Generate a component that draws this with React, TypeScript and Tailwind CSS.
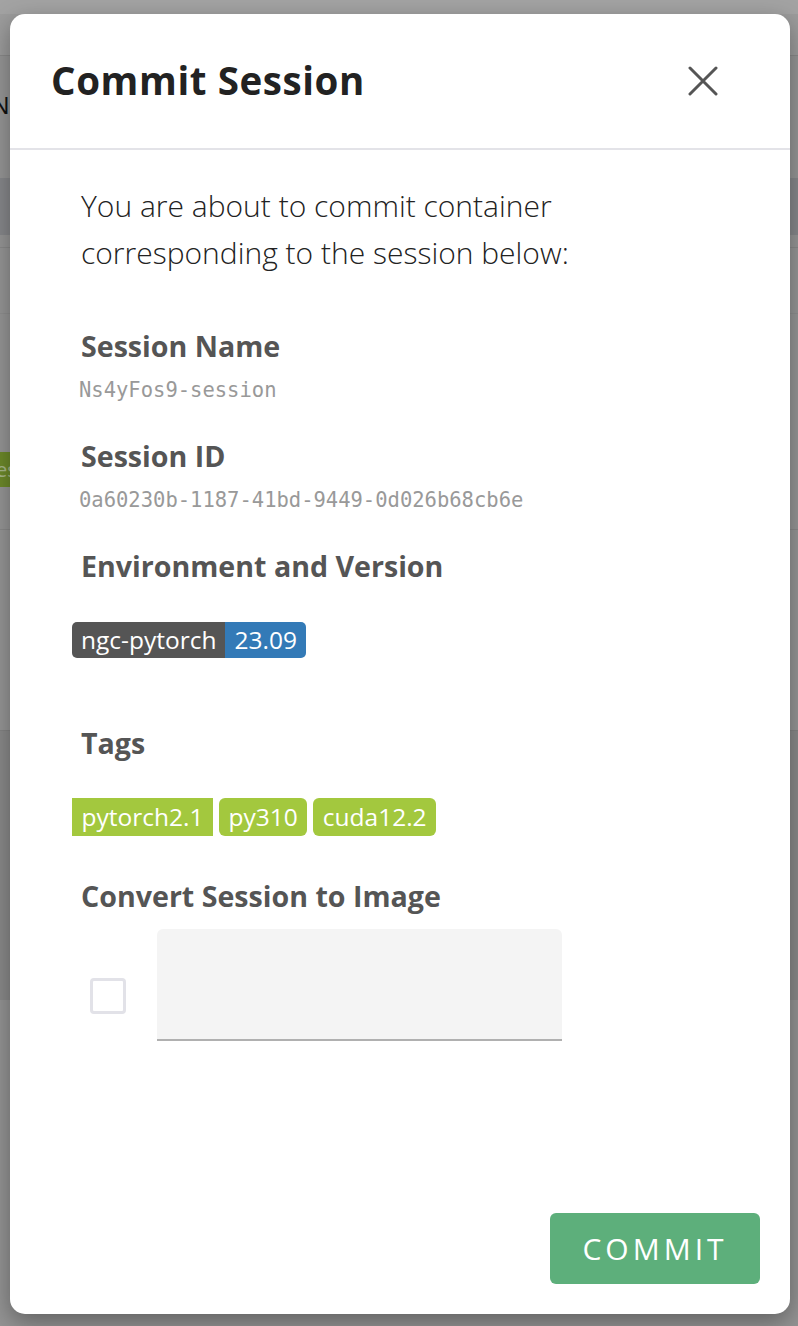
import React from "react";

const font = { fontFamily: '"Open Sans", "Noto Sans", sans-serif' };

const BackgroundPage = () => (
  <div className="flex flex-col h-[1326px] bg-[#969696]">
    <div className="h-[14px] bg-[#a3a3a3]" />
    <div className="h-[42px] bg-[#9c9c9c] border-b border-[#8a8a8a]" />
    <div className="h-[122px] flex items-start pt-[36px] text-[24px] leading-[28px] text-[#111] font-['Liberation_Sans']">
      <span className="-ml-[8px]">N</span>
    </div>
    <div className="h-[57px] bg-[#87888b]" />
    <div className="h-[13px] border-b border-[#8a8a8a]" />
    <div className="h-[66px] border-b border-[#8f8f8f]" />
    <div className="h-[156px] flex items-center">
      <div className="w-[24px] h-[35px] bg-[#6d8a2a] -ml-[10px] mt-[155px] text-[#a9b98a] text-[20px] leading-[35px] pl-[6px]">es</div>
    </div>
    <div className="h-[60px] border-b border-[#8a8a8a]" />
    <div className="h-[200px]" />
    <div className="h-[270px] bg-[#8a8a8a] border-t border-[#838383]" />
    <div className="flex-1 bg-[#949494]" />
  </div>
);

const Badge = ({ text, square }: { text: string; square?: boolean }) => (
  <span
    className={`bg-[#a3c83e] text-white text-[24.5px] leading-[38px] h-[38px] px-[9.5px] ${square ? "" : "rounded-[6px]"}`}
  >
    {text}
  </span>
);

const Label = ({ children, className = "" }: { children: React.ReactNode; className?: string }) => (
  <p className={`text-[28.6px] leading-[40px] font-bold text-[#555] ${className}`}>{children}</p>
);

const App = () => {
  return (
    <div className="relative w-[798px] h-[1326px] overflow-hidden" style={font}>
      <BackgroundPage />
      <div className="absolute left-[10px] top-[14px] w-[780px] h-[1300px] bg-white rounded-[15px] shadow-[0_8px_24px_rgba(0,0,0,0.35)] flex flex-col">
        <div className="h-[136px] flex items-center justify-between pl-[41px] pr-[72px] border-b-2 border-[#e3e3e8]">
          <h1 className="text-[38.5px] font-bold text-[#222] tracking-[0.6px]">Commit Session</h1>
          <svg width="30" height="30" viewBox="0 0 30 30" className="text-[#555]">
            <path d="M2 2 L28 28 M28 2 L2 28" stroke="currentColor" strokeWidth="3" strokeLinecap="round" />
          </svg>
        </div>
        <div className="flex flex-col pl-[71px] flex-1">
          <p className="mt-[32px] text-[30px] leading-[47px] text-[#222] font-light">
            You are about to commit container
            <br />
            corresponding to the session below:
          </p>
          <Label className="mt-[50px]">Session Name</Label>
          <p className="mt-[9px] -ml-[2px] text-[20.5px] leading-[30px] text-[#999] font-['DejaVu_Sans_Mono',monospace]">
            Ns4yFos9-session
          </p>
          <Label className="mt-[31px]">Session ID</Label>
          <p className="mt-[9px] -ml-[2px] text-[20.5px] leading-[30px] text-[#999] font-['DejaVu_Sans_Mono',monospace]">
            0a60230b-1187-41bd-9449-0d026b68cb6e
          </p>
          <Label className="mt-[31px]">Environment and Version</Label>
          <div className="mt-[36px] -ml-[9px] flex h-[36px] text-[24.5px] leading-[36px] text-white">
            <span className="bg-[#555] px-[9px] rounded-l-[5px]">ngc-pytorch</span>
            <span className="bg-[#337ab7] px-[9px] rounded-r-[5px]">23.09</span>
          </div>
          <Label className="mt-[65px]">Tags</Label>
          <div className="mt-[35px] -ml-[9px] flex gap-[6px]">
            <Badge text="pytorch2.1" square />
            <Badge text="py310" />
            <Badge text="cuda12.2" />
          </div>
          <Label className="mt-[40px]">Convert Session to Image</Label>
          <div className="mt-[13px] flex items-end">
            <div className="ml-[9px] mb-[27px] w-[36px] h-[36px] border-[3px] border-[#e2e2e8] rounded-[4px]" />
            <div className="ml-[31px] w-[405px] h-[112px] bg-[#f4f4f4] rounded-t-[6px] border-b-2 border-[#b0b0b0]" />
          </div>
        </div>
        <div className="flex justify-end pr-[30px] pb-[30px]">
          <button className="w-[210px] h-[71px] bg-[#5daf7b] rounded-[6px] text-white text-[30px] tracking-[4px] font-medium">
            COMMIT
          </button>
        </div>
      </div>
    </div>
  );
};

export default App;
